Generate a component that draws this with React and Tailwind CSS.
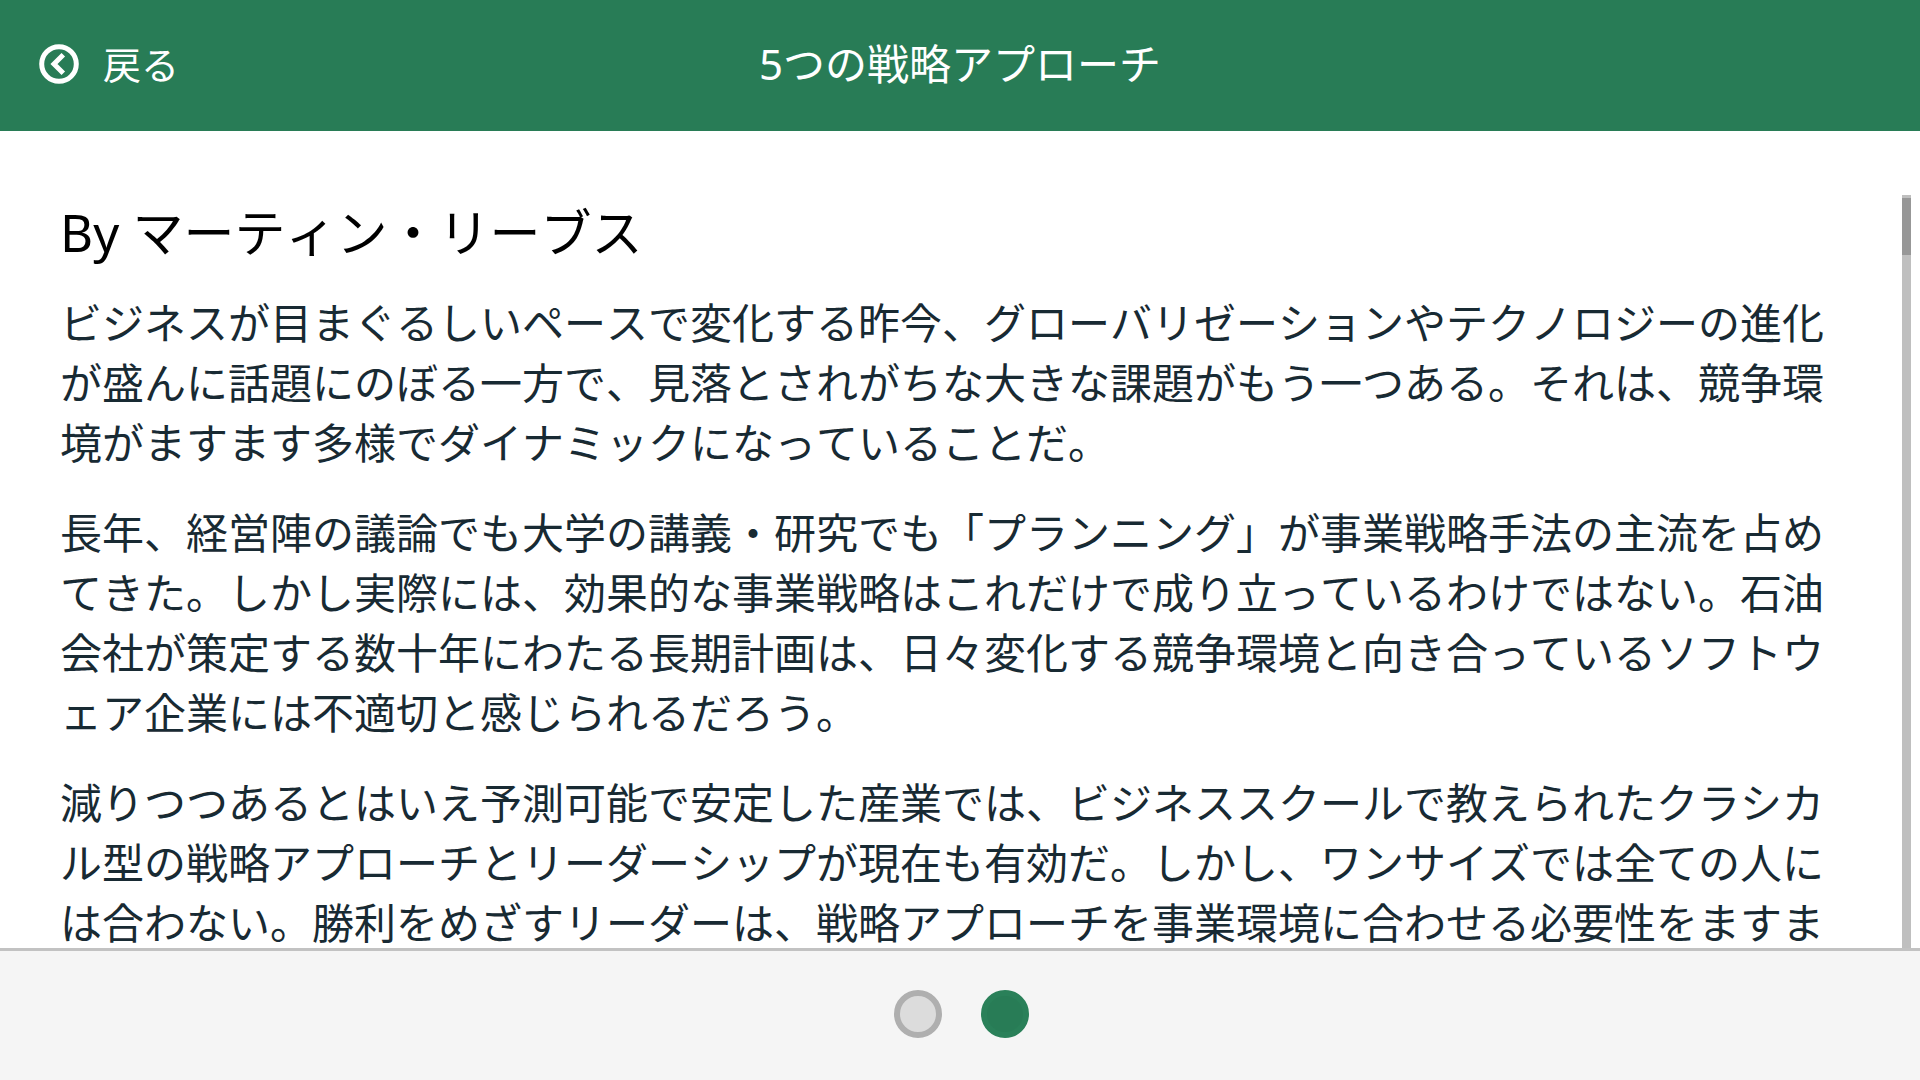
const paragraphs = [
  "ビジネスが目まぐるしいペースで変化する昨今、グローバリゼーションやテクノロジーの進化が盛んに話題にのぼる一方で、見落とされがちな大きな課題がもう一つある。それは、競争環境がますます多様でダイナミックになっていることだ。",
  "長年、経営陣の議論でも大学の講義・研究でも「プランニング」が事業戦略手法の主流を占めてきた。しかし実際には、効果的な事業戦略はこれだけで成り立っているわけではない。石油会社が策定する数十年にわたる長期計画は、日々変化する競争環境と向き合っているソフトウェア企業には不適切と感じられるだろう。",
  "減りつつあるとはいえ予測可能で安定した産業では、ビジネススクールで教えられたクラシカル型の戦略アプローチとリーダーシップが現在も有効だ。しかし、ワンサイズでは全ての人には合わない。勝利をめざすリーダーは、戦略アプローチを事業環境に合わせる必要性をますま",
];

function BackIcon() {
  return (
    <svg className="size-10" viewBox="0 0 40 40" fill="none" stroke="currentColor" strokeWidth="5" aria-hidden="true">
      <circle cx="20" cy="20" r="17.3" />
      <path d="M24.3 10.8 L15 20 L24.3 29.2" />
    </svg>
  );
}

function Header() {
  return (
    <header className="grid h-[131px] shrink-0 grid-cols-[1fr_auto_1fr] items-center bg-[#287c56] px-[39px] pb-1 text-white">
      <button type="button" className="flex items-center gap-6 justify-self-start text-[38px] leading-[56px]">
        <BackIcon />
        <span>戻る</span>
      </button>
      <h1 className="text-[42px] leading-[60px]">5つの戦略アプローチ</h1>
    </header>
  );
}

function Article() {
  return (
    <main className="flex min-h-0 flex-1 pt-16 pr-[9px]">
      <article className="flex-1 overflow-y-auto pr-[62px] pl-[60px] [scrollbar-width:none]">
        <h2 className="text-[51px] leading-[74px] text-black">By マーティン・リーブス</h2>
        <div className="mt-6 flex flex-col gap-[30px] text-[42px] leading-[60px] text-[#182a33] [line-break:anywhere]">
          {paragraphs.map((text) => (
            <p key={text}>{text}</p>
          ))}
        </div>
      </article>
      <div className="w-[9px] shrink-0 bg-[#bfbfbf] pt-[3px]">
        <div className="h-[57px] bg-[#979797]" />
      </div>
    </main>
  );
}

function Pager() {
  return (
    <nav aria-label="ページ" className="flex h-[132px] shrink-0 items-center justify-center gap-[39px] border-t-[3px] border-[#c2c2c2] bg-[#f5f5f5] pb-1 pl-[3px]">
      <button type="button" aria-label="1" className="size-12 rounded-full border-6 border-[#afafaf] bg-[#dcdcdc]" />
      <button type="button" aria-label="2" aria-current="page" className="size-12 rounded-full border-6 border-[#2a8059] bg-[#287c56]" />
    </nav>
  );
}

export default function App() {
  return (
    <div lang="ja" className="flex h-screen flex-col bg-white font-['Noto_Sans','Noto_Sans_CJK_JP',sans-serif] [font-kerning:none]">
      <Header />
      <Article />
      <Pager />
    </div>
  );
}
